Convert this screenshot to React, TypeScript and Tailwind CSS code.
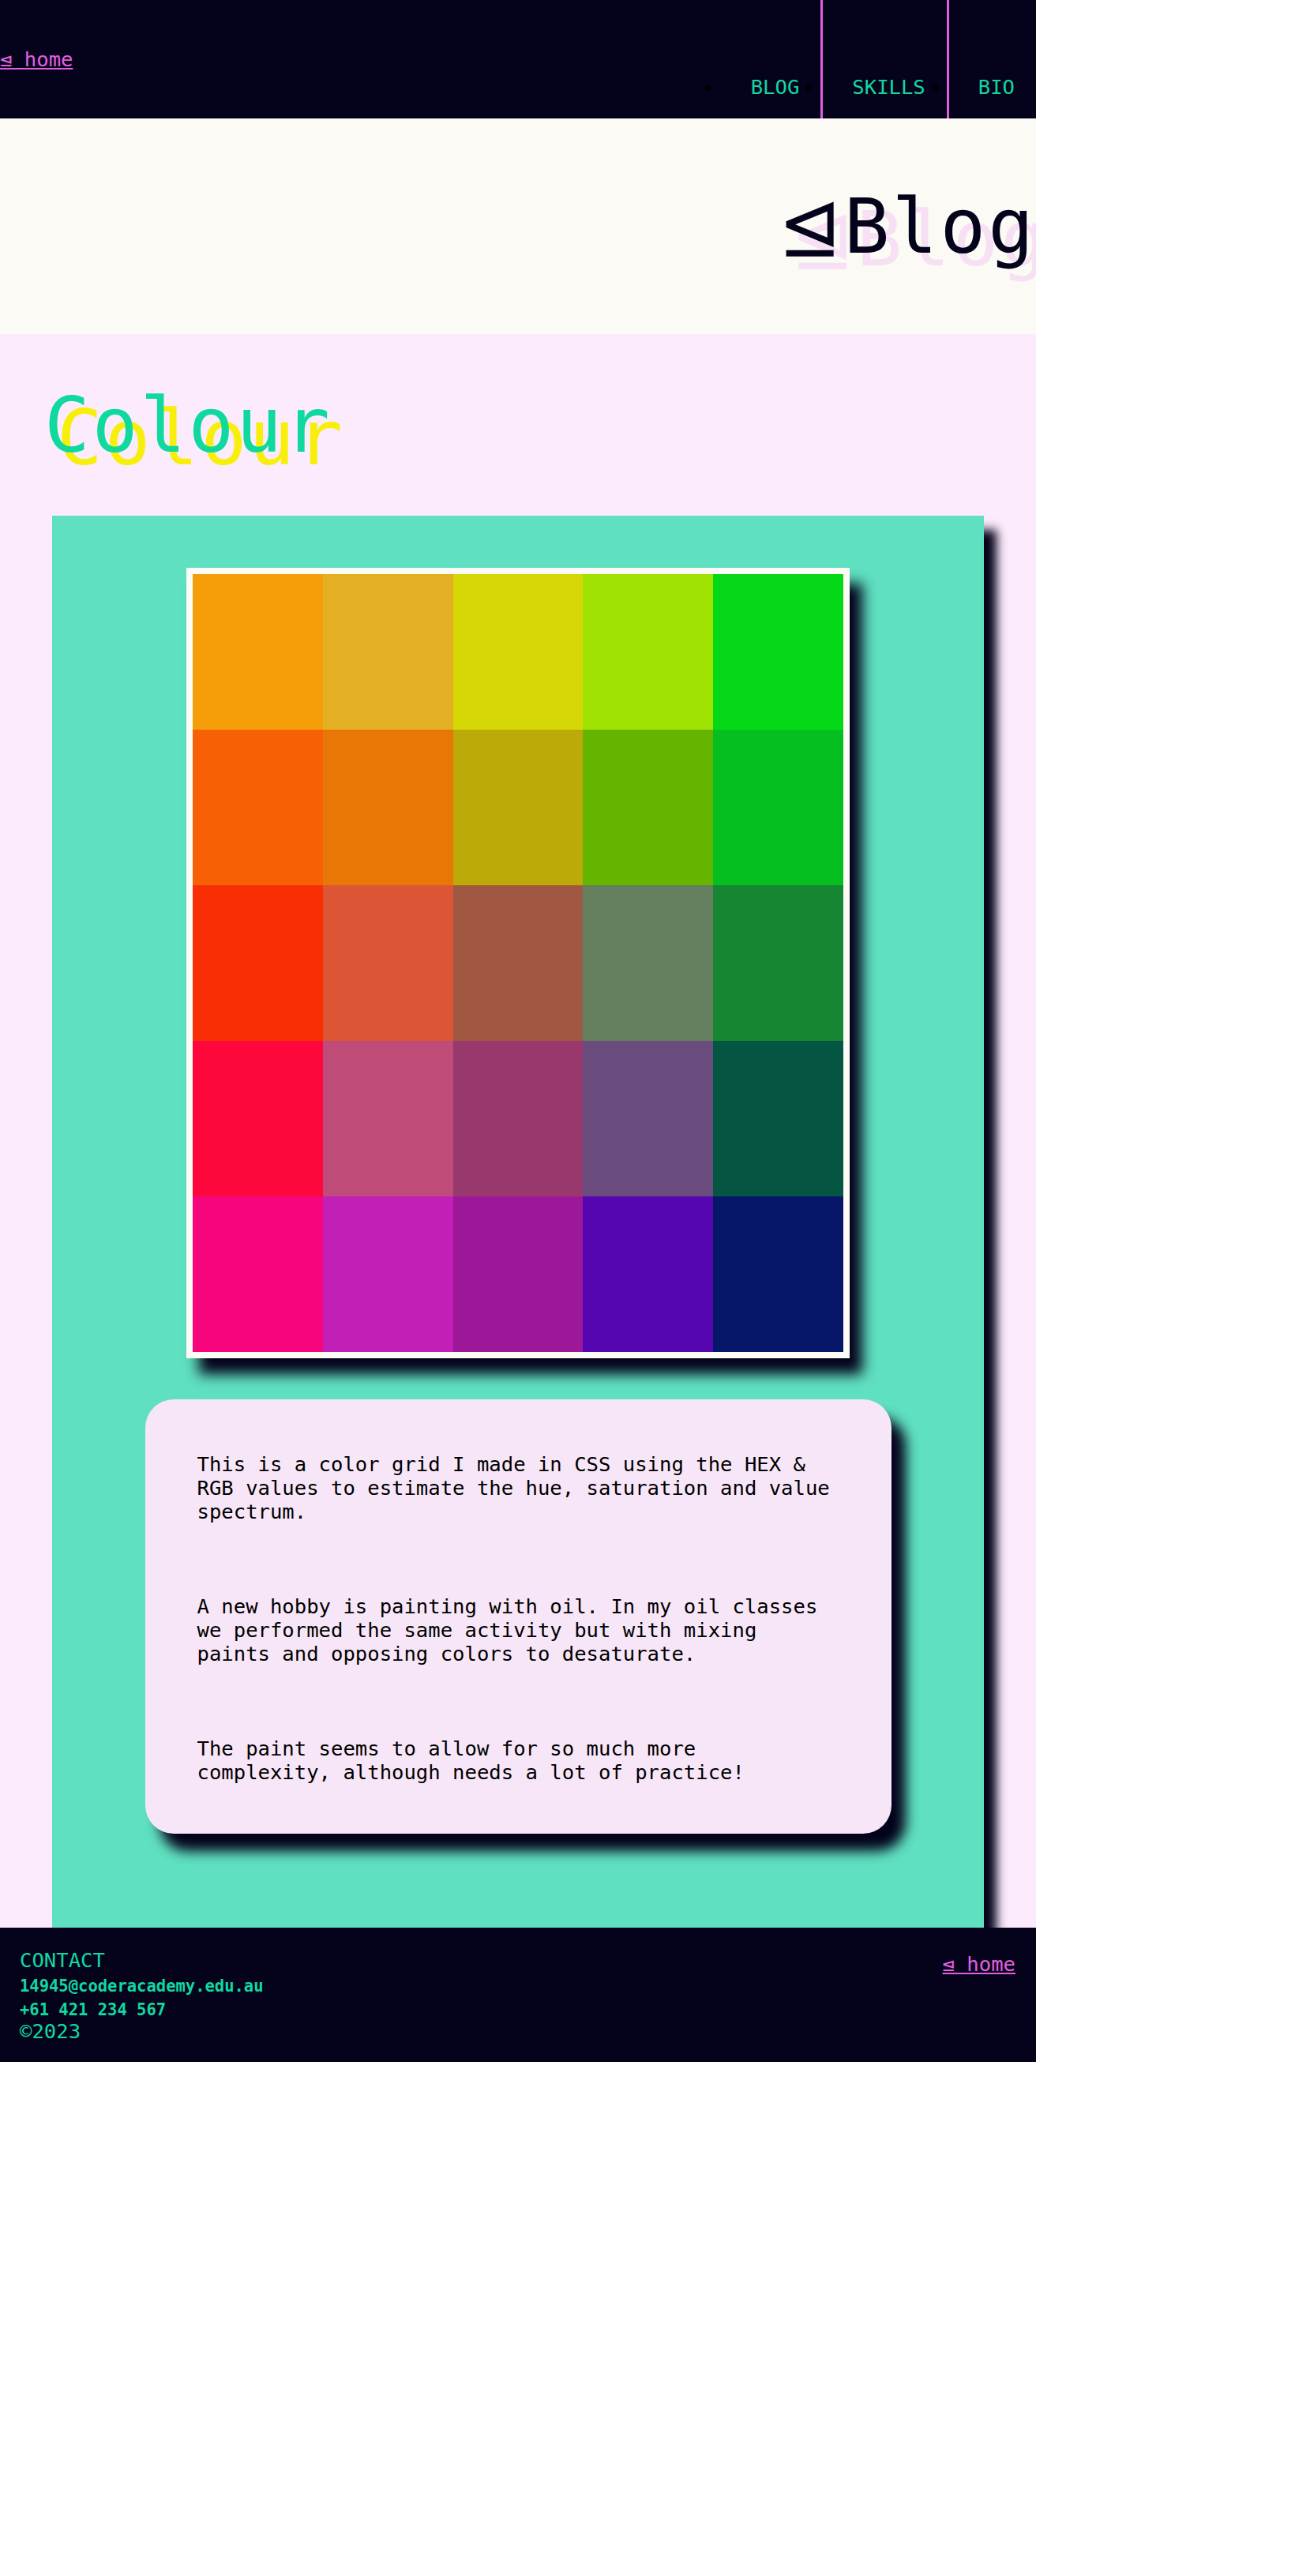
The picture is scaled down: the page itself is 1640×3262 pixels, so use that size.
const navItems = [
  { label: 'BLOG', border: 'border-transparent' },
  { label: 'SKILLS', border: 'border-[#dc5fe0]' },
  { label: 'BIO', border: 'border-[#dc5fe0]' },
];

// HSV-ish colour study, one row per band
const swatches = [
  ['bg-[#f69e0a]', 'bg-[#e2b022]', 'bg-[#d5d806]', 'bg-[#a0e202]', 'bg-[#05d917]'],
  ['bg-[#f76004]', 'bg-[#e87707]', 'bg-[#bbaa07]', 'bg-[#64b400]', 'bg-[#05bf20]'],
  ['bg-[#f92e05]', 'bg-[#dc5535]', 'bg-[#a05843]', 'bg-[#637f5e]', 'bg-[#158631]'],
  ['bg-[#fd073d]', 'bg-[#bf4b79]', 'bg-[#98386d]', 'bg-[#6a4b7d]', 'bg-[#045642]'],
  ['bg-[#f7057c]', 'bg-[#c11fb5]', 'bg-[#9d1799]', 'bg-[#5506b1]', 'bg-[#061669]'],
];

const paragraphs = [
  'This is a color grid I made in CSS using the HEX & RGB values to estimate the hue, saturation and value spectrum.',
  'A new hobby is painting with oil. In my oil classes we performed the same activity but with mixing paints and opposing colors to desaturate.',
  'The paint seems to allow for so much more complexity, although needs a lot of practice!',
];

function HomeLink({ className = '' }: { className?: string }) {
  return (
    <a href="#" className={`text-[25.6px] leading-[normal] text-[#e35fe0] underline ${className}`}>
      ⊴ home
    </a>
  );
}

export default function App() {
  return (
    <div className="w-[1312px] overflow-hidden font-['DejaVu_Sans_Mono',monospace]">
      <header className="flex h-[150px] items-stretch justify-between bg-[#05031c]">
        <HomeLink className="self-center" />
        <ul className="flex">
          {navItems.map((item) => (
            <li
              key={item.label}
              className={`relative flex items-end border-l-[3px] pb-[25px] pl-[37px] pr-[27px] ${item.border}`}
            >
              <span className="absolute bottom-[35px] left-[-22px] h-2 w-2 rounded-full bg-black" />
              <a href="#" className="text-[25.6px] leading-[normal] text-[#10d9a0]">
                {item.label}
              </a>
            </li>
          ))}
        </ul>
      </header>

      <section className="flex h-[273px] items-center justify-end bg-[#fbfaf4]">
        <h2 className="text-[96px] leading-[normal] tracking-[3px] whitespace-nowrap text-[#05031c] [text-shadow:16px_16px_0_#f7e0f4]">
          <span className="font-['DejaVu_Sans',sans-serif]">⊴</span>Blog
        </h2>
      </section>

      <section className="bg-[#fcebfc] pt-[60px]">
        <h1 className="pl-[56px] text-[96px] leading-[normal] tracking-[3px] text-[#0fd99e] [text-shadow:16px_16px_0_#f7ee0a]">
          Colour
        </h1>

        <div className="mx-auto mt-[58px] w-[1180px] bg-[#5fe0c0] pt-[66px] pb-[119px] shadow-[16px_18px_12px_#05031c]">
          <div className="mx-auto w-fit border-[8px] border-[#fcfbf5] shadow-[16px_20px_16px_#05031c]">
            <div className="grid w-[824px] grid-cols-5">
              {swatches.flat().map((bg, i) => (
                <div key={i} className={`h-[197px] ${bg}`} />
              ))}
            </div>
          </div>

          <article className="mx-auto mt-[52px] flex w-[945px] flex-col gap-[90px] rounded-[36px] bg-[#f7e6f7] pt-[67px] pr-[66px] pb-[63px] pl-[66px] shadow-[18px_22px_16px_#05031c]">
            {paragraphs.map((text) => (
              <p key={text} className="text-[25.6px] leading-[normal] text-black">
                {text}
              </p>
            ))}
          </article>
        </div>
      </section>

      <footer className="flex h-[170px] items-start justify-between bg-[#05031c] pt-[26px] pr-[26px] pl-[25px] text-[#10d9a0]">
        <div>
          <h3 className="text-[25.6px] leading-[normal]">CONTACT</h3>
          <p className="mt-[6px] text-[20.5px] leading-[normal] font-bold">14945@coderacademy.edu.au</p>
          <p className="mt-[6px] text-[20.5px] leading-[normal] font-bold">+61 421 234 567</p>
          <p className="text-[25.6px] leading-[normal]">©2023</p>
        </div>
        <HomeLink className="mt-[5px]" />
      </footer>
    </div>
  );
}
